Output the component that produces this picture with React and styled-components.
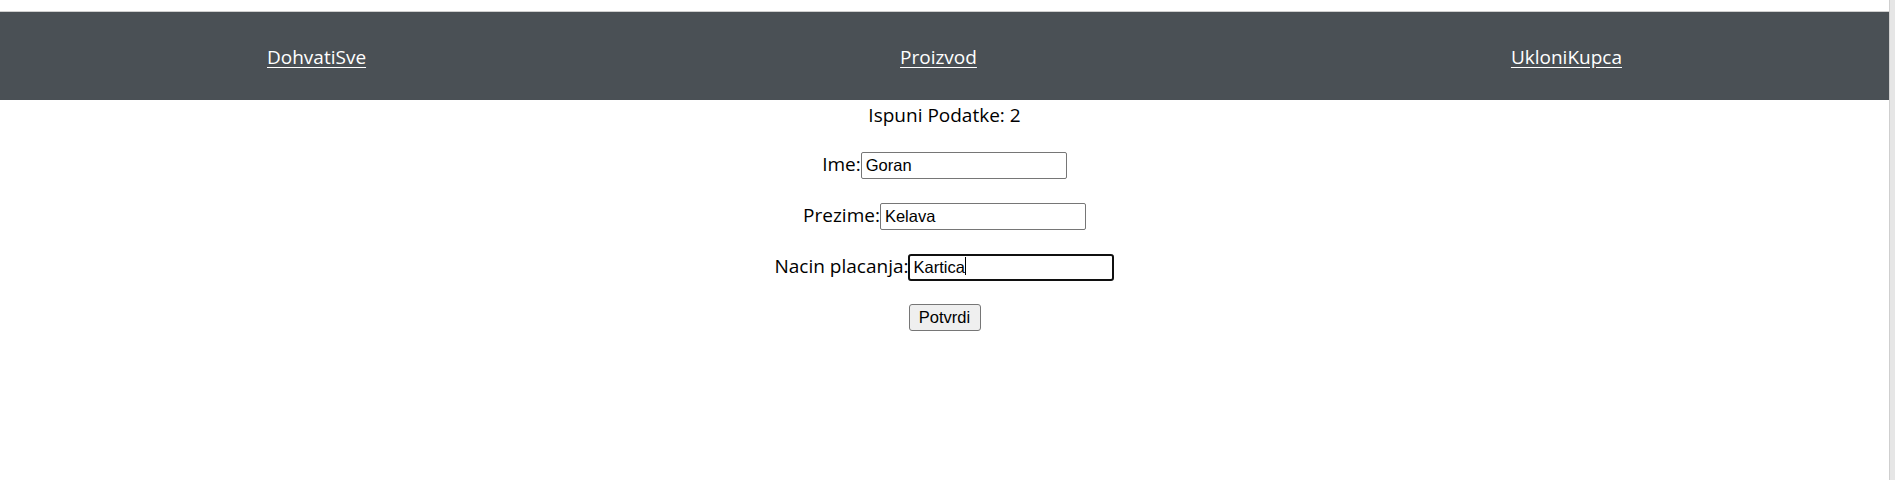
import React, { useState } from 'react';
import styled, { createGlobalStyle } from 'styled-components';

const GlobalStyle = createGlobalStyle`
  html, body {
    margin: 0;
    padding: 0;
    background: #ffffff;
  }
  body {
    font-family: "Open Sans", "Noto Sans", sans-serif;
    color: #000000;
  }
`;

const Page = styled.div`
  display: flex;
  min-height: 480px;
`;

const Main = styled.div`
  flex: 1;
  padding-top: 11px;
`;

const ScrollTrack = styled.div`
  width: 5px;
  background: #e6e6e6;
  border-left: 1px solid #cfcfcf;
`;

const NavBar = styled.nav`
  height: 88px;
  border-top: 1px solid #cfcfcf;
  background-color: #4a5055;
  display: flex;
  justify-content: space-around;
  align-items: center;
`;

const NavLink = styled.a`
  color: #ffffff;
  font-size: 19px;
  text-decoration: underline;
  text-underline-offset: 3px;
  cursor: pointer;
  padding-top: 2px;
`;

const Form = styled.form`
  display: flex;
  flex-direction: column;
  align-items: center;
  gap: 24px;
`;

const Heading = styled.div`
  font-size: 19px;
  line-height: 24px;
  padding-top: 3px;
`;

const Row = styled.div`
  font-size: 19px;
  line-height: 27px;
  height: 27px;
  white-space: nowrap;
`;

const Field = styled.span`
  position: relative;
  display: inline-block;
`;

const Input = styled.input`
  box-sizing: border-box;
  width: 206px;
  height: 27px;
  margin: 0;
  font-family: "Liberation Sans", Arial, sans-serif;
  font-size: 16.5px;
  color: #000000;
  background: #ffffff;
  border: ${(p) => (p.$active ? '2px solid #101010' : '1px solid #767676')};
  border-radius: ${(p) => (p.$active ? '3px' : '2px')};
  padding: 0 4px 0 ${(p) => (p.$active ? '3px' : '4px')};
  outline: none;
  vertical-align: baseline;
`;

const Caret = styled.span`
  position: absolute;
  top: 4px;
  width: 1px;
  height: 18px;
  background: #000000;
`;

const SubmitButton = styled.button`
  box-sizing: border-box;
  width: 72px;
  height: 27px;
  padding: 0;
  vertical-align: top;
  font-family: "Liberation Sans", Arial, sans-serif;
  font-size: 16.5px;
  color: #000000;
  background: #efefef;
  border: 1px solid #767676;
  border-radius: 3px;
`;

const fields = [
  { key: 'ime', label: 'Ime:', value: 'Goran' },
  { key: 'prezime', label: 'Prezime:', value: 'Kelava' },
  { key: 'nacin', label: 'Nacin placanja:', value: 'Kartica', active: true },
];

export default function App() {
  const [values, setValues] = useState(
    Object.fromEntries(fields.map((f) => [f.key, f.value]))
  );

  return (
    <>
      <GlobalStyle />
      <Page>
        <Main>
          <NavBar>
            <NavLink>DohvatiSve</NavLink>
            <NavLink>Proizvod</NavLink>
            <NavLink>UkloniKupca</NavLink>
          </NavBar>
          <Form onSubmit={(e) => e.preventDefault()}>
            <Heading>Ispuni Podatke: 2</Heading>
            {fields.map((f) => (
              <Row key={f.key}>
                {f.label}
                <Field>
                  <Input
                    $active={f.active}
                    value={values[f.key]}
                    onChange={(e) => setValues({ ...values, [f.key]: e.target.value })}
                  />
                  {f.active && <Caret style={{ left: 57 }} />}
                </Field>
              </Row>
            ))}
            <Row>
              <SubmitButton type="submit">Potvrdi</SubmitButton>
            </Row>
          </Form>
        </Main>
        <ScrollTrack />
      </Page>
    </>
  );
}
